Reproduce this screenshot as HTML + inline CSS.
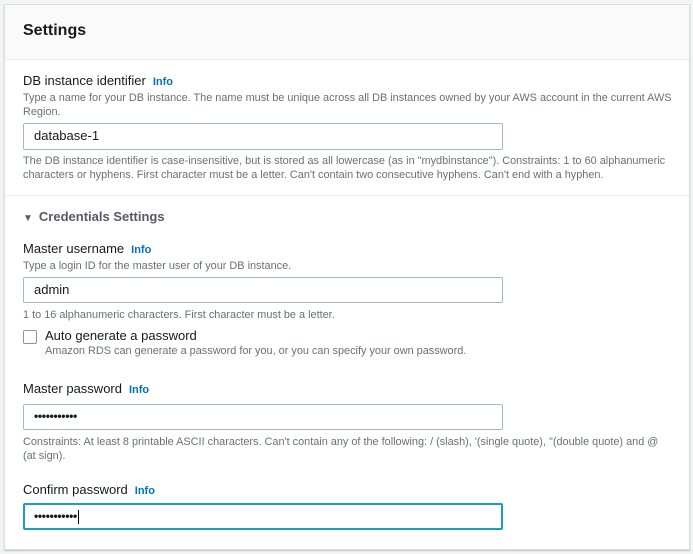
<!DOCTYPE html><html><head><style>
body{margin:0;width:693px;height:554px;background:#f2f3f3;font-family:"Liberation Sans",sans-serif;position:relative;overflow:hidden;color:#16191f}
.p{position:absolute;left:4px;top:4px;width:684px;height:544px;background:#fff;border:1px solid #dcdcdc;box-shadow:0 1px 1px rgba(0,0,0,.2)}
.h{position:absolute;left:0;top:0;right:0;height:54px;background:#fafafa;border-bottom:1px solid #eaeded}
.t{position:absolute;white-space:nowrap}
.l{font-size:13px;color:#16191f}
.d{font-size:10.9px;color:#687078;line-height:14px}
.i{color:#0073bb;font-size:11px;font-weight:bold;margin-left:7px}
.in{position:absolute;left:18px;width:480px;height:25px;border:1px solid #aab7b8;border-radius:2px;box-sizing:border-box;font-size:13px;padding-left:10px;line-height:23px}
.pw{font-size:12px;letter-spacing:-0.3px;font-weight:bold}
</style></head><body><div class="p">
<div class="h"><div class="t" style="left:18px;top:17px;font-size:16px;font-weight:bold">Settings</div></div>
<div class="t l" style="left:18px;top:68px">DB instance identifier<span class="i">Info</span></div>
<div class="t d" style="left:18px;top:86px">Type a name for your DB instance. The name must be unique across all DB instances owned by your AWS account in the current AWS<br>Region.</div>
<div class="in" style="top:118px;height:27px">database-1</div>
<div class="t d" style="left:18px;top:149px">The DB instance identifier is case-insensitive, but is stored as all lowercase (as in "mydbinstance"). Constraints: 1 to 60 alphanumeric<br>characters or hyphens. First character must be a letter. Can't contain two consecutive hyphens. Can't end with a hyphen.</div>
<div style="position:absolute;left:0;right:0;top:190px;border-top:1px solid #eaeded"></div>
<div class="t" style="left:18px;top:204px;font-size:13px;font-weight:bold;color:#545b64"><span style="font-size:10px;margin-right:6px">▼</span>Credentials Settings</div>
<div class="t l" style="left:18px;top:236px">Master username<span class="i">Info</span></div>
<div class="t d" style="left:18px;top:254px">Type a login ID for the master user of your DB instance.</div>
<div class="in" style="top:272px;height:26px">admin</div>
<div class="t d" style="left:18px;top:303px">1 to 16 alphanumeric characters. First character must be a letter.</div>
<div style="position:absolute;left:18px;top:325px;width:12px;height:12px;border:1px solid #8d9596;border-radius:2px"></div>
<div class="t l" style="left:40px;top:323px">Auto generate a password</div>
<div class="t d" style="left:40px;top:339px">Amazon RDS can generate a password for you, or you can specify your own password.</div>
<div class="t l" style="left:18px;top:376px">Master password<span class="i">Info</span></div>
<div class="in pw" style="top:399px;height:26px">•••••••••••</div>
<div class="t d" style="left:18px;top:430px">Constraints: At least 8 printable ASCII characters. Can't contain any of the following: / (slash), '(single quote), "(double quote) and @<br>(at sign).</div>
<div class="t l" style="left:18px;top:477px">Confirm password<span class="i">Info</span></div>
<div class="in pw" style="top:498px;height:27px;border:2px solid #1a9fb5;padding-left:9px">•••••••••••<span style="display:inline-block;width:1px;height:14px;background:#000;vertical-align:middle;margin-left:1px"></span></div>
</div></body></html>
